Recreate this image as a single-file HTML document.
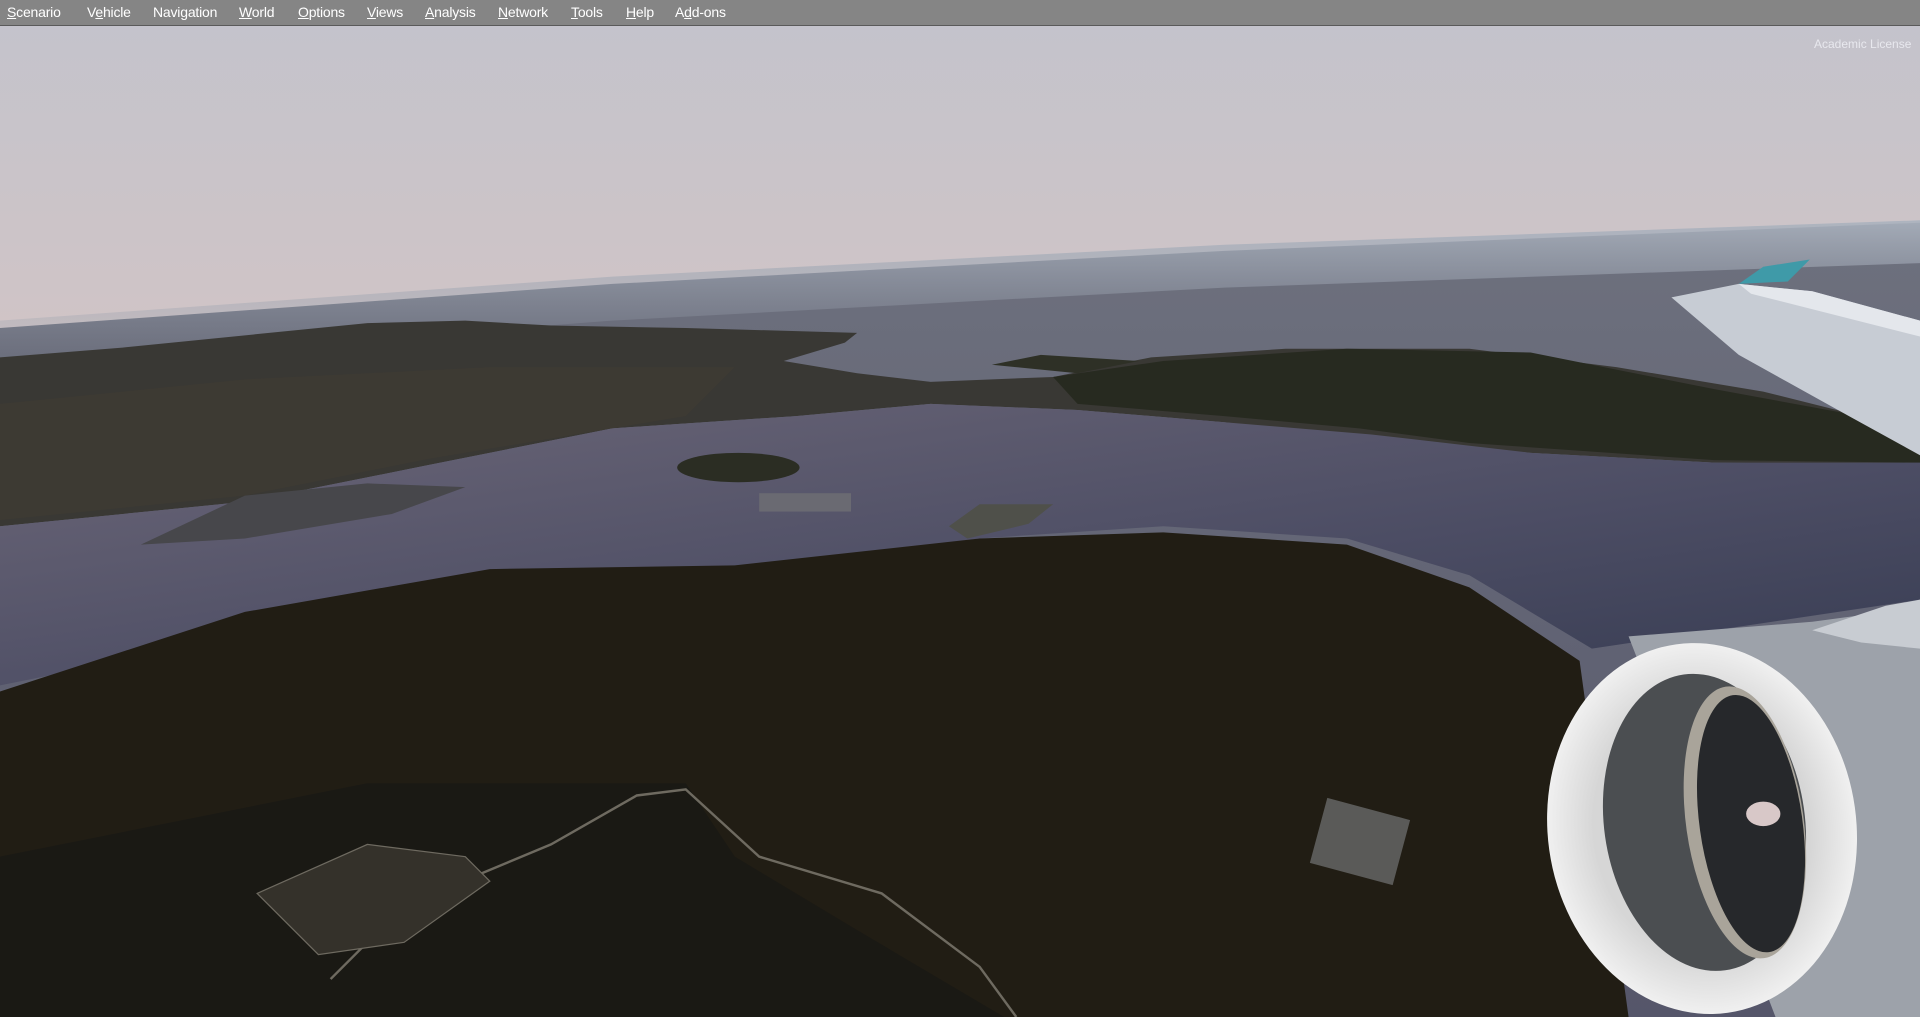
<!DOCTYPE html>
<html><head><meta charset="utf-8"><style>
html,body{margin:0;padding:0;width:1920px;height:1017px;overflow:hidden;background:#222}
svg{position:absolute;left:0;top:0}
#menu{position:absolute;left:0;top:0;width:1920px;height:26px;background:#858585;border-bottom:1px solid #5a5a5a;box-sizing:border-box;font-family:"Liberation Sans",sans-serif;font-size:14px;color:#fff}
#menu span{position:absolute;top:4px;letter-spacing:-0.2px}
#lic{position:absolute;left:1814px;top:37px;font-family:"Liberation Sans",sans-serif;font-size:12px;color:#e8e8ee}
</style></head><body>
<svg width="1920" height="1017" viewBox="0 0 1568 831" preserveAspectRatio="none">
<defs>
<linearGradient id="sky" x1="0" y1="0" x2="0" y2="1">
<stop offset="0" stop-color="#c3c3cc"/><stop offset="0.45" stop-color="#d5c5c4"/><stop offset="0.72" stop-color="#c6c4cb"/><stop offset="1" stop-color="#a9b0bc"/></linearGradient>
<linearGradient id="sea" x1="0" y1="0" x2="0" y2="1">
<stop offset="0" stop-color="#6e717e"/><stop offset="1" stop-color="#55566a"/></linearGradient>
<linearGradient id="bay" x1="0" y1="0" x2="1" y2="1">
<stop offset="0" stop-color="#6c6778"/><stop offset="0.6" stop-color="#4c4d64"/><stop offset="1" stop-color="#373c52"/></linearGradient>
<linearGradient id="haze" x1="0" y1="0" x2="0" y2="1">
<stop offset="0" stop-color="#aab2be" stop-opacity="0.9"/><stop offset="1" stop-color="#8e95a3" stop-opacity="0"/></linearGradient>
<radialGradient id="ring" cx="0.5" cy="0.5" r="0.5"><stop offset="0.7" stop-color="#d6d6d6"/><stop offset="1" stop-color="#f0f0f0"/></radialGradient>
</defs>
<rect width="1568" height="831" fill="url(#sky)"/>
<polygon points="0,268 500,232 1000,205 1568,182 1568,831 0,831" fill="url(#sea)"/>
<polygon points="0,262 500,226 1000,200 1568,180 1568,215 1000,235 500,262 0,300" fill="url(#haze)"/>
<!-- far land -->
<polygon points="0,292 100,284 300,264 380,262 450,266 560,268 700,272 690,280 640,295 700,305 760,312 860,308 940,292 1050,285 1200,285 1320,300 1440,320 1540,345 1568,360 1568,380 1400,378 1250,370 1120,360 1000,345 880,335 760,330 650,340 500,350 350,380 200,410 0,430" fill="#393834"/>
<polygon points="0,330 200,310 400,300 600,300 560,340 350,375 200,405 0,425" fill="#3d3a33"/>
<polygon points="860,308 950,295 1100,285 1250,288 1400,318 1520,340 1568,365 1568,378 1400,376 1200,362 1110,350 1000,340 880,330" fill="#272a20"/>
<polygon points="810,298 850,290 930,295 880,305" fill="#2e3026"/>
<!-- bay -->
<polygon points="0,430 200,410 350,380 500,350 650,340 760,330 880,335 1000,345 1120,355 1250,370 1400,378 1568,378 1568,490 1300,530 1200,470 1100,440 950,430 800,440 600,465 400,470 200,520 0,560" fill="url(#bay)"/>
<ellipse cx="603" cy="382" rx="50" ry="12" fill="#2b2d23"/>
<polygon points="115,445 200,405 300,395 380,398 320,420 200,440" fill="#47474b"/>
<rect x="620" y="403" width="75" height="15" fill="#6a6a72"/>
<polygon points="775,430 800,412 860,412 840,428 790,440" fill="#4f504a"/>
<!-- foreground forest -->
<polygon points="0,565 200,500 400,465 600,462 800,440 950,435 1100,445 1200,480 1290,540 1330,831 0,831" fill="#211d14"/>
<polygon points="0,700 300,640 560,640 600,700 700,760 820,831 0,831" fill="#1a1914"/>
<path d="M270,800 L330,740 L450,690 L520,650 L560,645 L620,700 L720,730 L800,790 L830,831" stroke="#6e6a60" stroke-width="2" fill="none"/>
<path d="M210,730 L300,690 L380,700 L400,720 L330,770 L260,780 Z" fill="#34312a" stroke="#6e6a60"/>
<rect x="1075" y="660" width="70" height="55" fill="#5a5a58" transform="rotate(15 1110 690)"/>
<!-- wing -->
<polygon points="1420,232 1440,218 1478,212 1460,230" fill="#3f9aa8"/>
<polygon points="1365,243 1420,232 1480,238 1568,262 1568,372 1510,340 1420,290" fill="#c7ccd4"/>
<polygon points="1420,232 1480,238 1568,262 1568,275 1430,240" fill="#e4e7ec"/>
<!-- engine -->
<polygon points="1330,520 1480,508 1540,500 1568,490 1568,831 1450,831 1400,700" fill="#9da2aa"/>
<polygon points="1480,515 1540,495 1568,490 1568,530 1520,525" fill="#c8ccd2"/>
<ellipse cx="1390" cy="677" rx="126" ry="152" fill="url(#ring)" transform="rotate(-8 1390 677)"/>
<ellipse cx="1392" cy="672" rx="82" ry="122" fill="#4b4e51" transform="rotate(-8 1392 672)"/>
<ellipse cx="1425" cy="672" rx="48" ry="112" fill="#a9a49a" transform="rotate(-8 1425 672)"/>
<ellipse cx="1430" cy="673" rx="42" ry="106" fill="#26282b" transform="rotate(-8 1430 673)"/>
<ellipse cx="1440" cy="665" rx="14" ry="10" fill="#d8c8c8"/>
</svg>
<div id="menu">
<span style="left:7px"><u>S</u>cenario</span>
<span style="left:87px">V<u>e</u>hicle</span>
<span style="left:153px">Navi<u>g</u>ation</span>
<span style="left:239px"><u>W</u>orld</span>
<span style="left:298px"><u>O</u>ptions</span>
<span style="left:367px"><u>V</u>iews</span>
<span style="left:425px"><u>A</u>nalysis</span>
<span style="left:498px"><u>N</u>etwork</span>
<span style="left:571px"><u>T</u>ools</span>
<span style="left:626px"><u>H</u>elp</span>
<span style="left:675px">A<u>d</u>d-ons</span>
</div>
<div id="lic">Academic License</div>
</body></html>
